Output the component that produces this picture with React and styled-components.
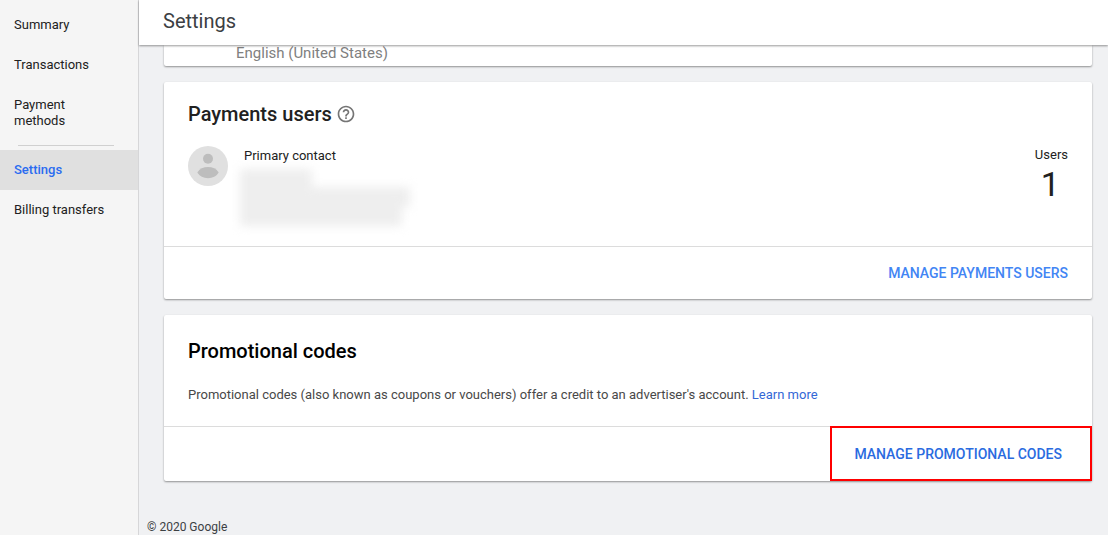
import React from "react";
import styled, { createGlobalStyle } from "styled-components";

const GlobalStyle = createGlobalStyle`
  *, *::before, *::after { box-sizing: border-box; }
  body {
    margin: 0;
    background: #f0f1f3;
    color: #212121;
    font-family: Roboto, "Liberation Sans", sans-serif;
    font-size: 13px;
    line-height: 16px;
  }
  h1, h2, p { margin: 0; }
`;

const Page = styled.div`
  display: flex;
  min-height: 100vh;
`;

const Sidebar = styled.nav`
  flex: 0 0 139px;
  padding-top: 5px;
  background: #f5f5f5;
  border-right: 1px solid #d6d6d8;
`;

const NavLink = styled.a`
  display: block;
  padding: 12px ${(p) => (p.$wrap ? "48px" : "14px")} 12px 14px;
  color: ${(p) => (p.$active ? "#2a6cf0" : "#212121")};
  background: ${(p) => (p.$active ? "#e0e0e0" : "transparent")};
  font-weight: ${(p) => (p.$active ? 500 : 400)};
  text-decoration: none;
`;

const NavDivider = styled.hr`
  margin: 4px 24px 4px 18px;
  border: 0;
  border-top: 1px solid #d0d0d0;
`;

const Main = styled.div`
  flex: 1;
  min-width: 0;
  display: flex;
  flex-direction: column;
`;

const Header = styled.header`
  position: relative;
  z-index: 1;
  height: 45px;
  padding: 9px 24px;
  background: #fff;
  box-shadow: 0 1px 2px rgba(0, 0, 0, 0.4);
`;

const PageTitle = styled.h1`
  font-size: 20px;
  line-height: 24px;
  font-weight: 400;
  color: #3c4043;
`;

const Cards = styled.main`
  display: flex;
  flex-direction: column;
  gap: 16px;
  padding: 0 16px 0 25px;
`;

const Card = styled.section`
  background: #fff;
  border-radius: ${(p) => (p.$scrolled ? "0 0 2px 2px" : "2px")};
  box-shadow: 0 1px 2px rgba(0, 0, 0, 0.4);
`;

const Language = styled.p`
  padding: 0 72px 5px;
  font-size: 15px;
  color: #808080;
`;

const CardBody = styled.div`
  padding: ${(p) => (p.$compact ? "24px 24px 23px" : "20px 24px")};
`;

const CardTitle = styled.h2`
  display: flex;
  align-items: center;
  gap: 4px;
  font-size: 20px;
  line-height: 24px;
  font-weight: 500;
  color: ${(p) => p.$color || "#212121"};
`;

const HelpButton = styled.button`
  display: flex;
  padding: 0;
  border: 0;
  background: none;
  color: #757575;
`;

const ContactRow = styled.div`
  display: flex;
  align-items: flex-start;
  gap: 16px;
  margin-top: 20px;
`;

const Avatar = styled.svg`
  flex: none;
  width: 40px;
  height: 40px;
`;

const Contact = styled.div`
  flex: 1;
  padding-top: 2px;
`;

const Redacted = styled.div`
  margin: 5px 0 0 -4px;
  filter: blur(5px);
`;

const RedactedLine = styled.div`
  width: ${(p) => p.$width}px;
  height: ${(p) => p.$height}px;
  background: #eeeeee;
`;

const UserCount = styled.div`
  padding-top: 1px;
  text-align: center;
`;

const Count = styled.div`
  padding-right: 2px;
  font-size: 34px;
  line-height: 42px;
`;

const Description = styled.p`
  margin-top: 24px;
  color: #484848;
`;

const TextLink = styled.a`
  color: #3367d6;
  text-decoration: none;
`;

const CardFooter = styled.footer`
  display: flex;
  justify-content: flex-end;
  border-top: 1px solid #dcdcdc;
`;

const Action = styled.button`
  height: 52px;
  padding: 0 24px;
  border: 0;
  background: none;
  font: 500 14px/16px Roboto, "Liberation Sans", sans-serif;
  color: ${(p) => (p.$highlighted ? "#2a6be0" : "#4285f4")};
`;

const Highlight = styled.div`
  margin-top: -1px;
  border: 2px solid #f00;

  ${Action} {
    height: 51px;
    padding: 0 28px 0 22px;
  }
`;

const Copyright = styled.footer`
  padding: 38px 8px 0;
  font-size: 12px;
  color: #3c4043;
`;

function HelpIcon() {
  return (
    <svg width="20" height="20" viewBox="0 0 24 24" fill="currentColor" aria-hidden="true">
      <path d="M11 18h2v-2h-2v2zm1-16C6.48 2 2 6.48 2 12s4.48 10 10 10 10-4.480 10-10S17.520 2 12 2zm0 18c-4.410 0-8-3.590-8-8s3.590-8 8-8 8 3.590 8 8-3.590 8-8 8zm0-14c-2.210 0-4 1.790-4 4h2c0-1.100.9-2 2-2s2 .9 2 2c0 2-3 1.750-3 5h2c0-2.250 3-2.500 3-5 0-2.210-1.790-4-4-4z" />
    </svg>
  );
}

function PersonAvatar() {
  return (
    <Avatar viewBox="0 0 40 40" aria-hidden="true">
      <circle cx="20" cy="20" r="20" fill="#e0e0e0" />
      <circle cx="20" cy="12.700" r="5" fill="#bdbdbd" />
      <path d="M9.300 26.500C11.500 22.800 15.500 21 20 21s8.500 1.800 10.700 5.500C28.500 30.200 24.500 32.200 20 32.200S11.500 30.200 9.300 26.500z" fill="#bdbdbd" />
    </Avatar>
  );
}

export default function App() {
  return (
    <Page>
      <GlobalStyle />
      <Sidebar aria-label="Payments">
        <NavLink href="#summary">Summary</NavLink>
        <NavLink href="#transactions">Transactions</NavLink>
        <NavLink href="#methods" $wrap>Payment methods</NavLink>
        <NavDivider />
        <NavLink href="#settings" $active aria-current="page">Settings</NavLink>
        <NavLink href="#transfers">Billing transfers</NavLink>
      </Sidebar>
      <Main>
        <Header>
          <PageTitle>Settings</PageTitle>
        </Header>
        <Cards>
          <Card $scrolled>
            <Language>English (United States)</Language>
          </Card>
          <Card>
            <CardBody>
              <CardTitle>
                Payments users
                <HelpButton type="button" aria-label="Help">
                  <HelpIcon />
                </HelpButton>
              </CardTitle>
              <ContactRow>
                <PersonAvatar />
                <Contact>
                  <p>Primary contact</p>
                  <Redacted aria-hidden="true">
                    <RedactedLine $width={72} $height={18} />
                    <RedactedLine $width={170} $height={20} />
                    <RedactedLine $width={162} $height={19} />
                  </Redacted>
                </Contact>
                <UserCount>
                  <div>Users</div>
                  <Count>1</Count>
                </UserCount>
              </ContactRow>
            </CardBody>
            <CardFooter>
              <Action type="button">MANAGE PAYMENTS USERS</Action>
            </CardFooter>
          </Card>
          <Card>
            <CardBody $compact>
              <CardTitle $color="#000">Promotional codes</CardTitle>
              <Description>
                Promotional codes (also known as coupons or vouchers) offer a credit to an
                advertiser's account. <TextLink href="#learn-more">Learn more</TextLink>
              </Description>
            </CardBody>
            <CardFooter>
              <Highlight>
                <Action type="button" $highlighted>MANAGE PROMOTIONAL CODES</Action>
              </Highlight>
            </CardFooter>
          </Card>
        </Cards>
        <Copyright>© 2020 Google</Copyright>
      </Main>
    </Page>
  );
}
